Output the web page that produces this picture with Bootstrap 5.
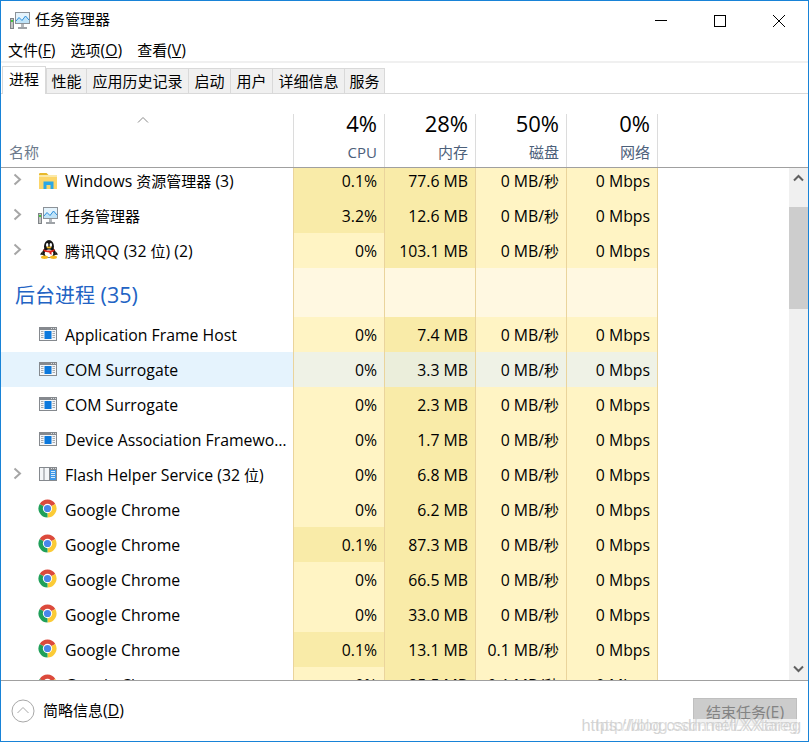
<!DOCTYPE html>
<html lang="zh-CN">
<head>
    <meta charset="UTF-8">
    <meta name="viewport" content="width=device-width, initial-scale=1.0">
    <title>任务管理器</title>
    <link href="https://cdn.jsdelivr.net/npm/bootstrap@5.3.0/dist/css/bootstrap.min.css" rel="stylesheet">
    <style>
        html, body { height: 100%; overflow: hidden; }
        body {
            font-family: "Open Sans", "Noto Sans CJK SC", sans-serif;
            font-size: 15.8px;
            color: #000;
            background: #fff;
        }
        .tm-cjk { font-size: 15px; }
        .tm-window { height: 742px; border: 1px solid #1883d7; position: relative; }
        .tm-title { height: 39px; padding-left: 9px; }
        .tm-title-text { margin-left: 5px; margin-top: -2px; }
        .tm-winbtn { width: 59px; height: 39px; }
        .tm-menu { height: 21px; padding-left: 7px; gap: 15px; line-height: 21px; }
        .tm-band { height: 2px; background: #f0f0f0; }

        .tm-tabs { height: 31px; padding-left: 1px; padding-top: 3px; border-bottom: 1px solid #d9d9d9; flex-wrap: nowrap; }
        .tm-tabs .nav-link {
            height: 25px;
            margin-top: 2px;
            padding: 0 5.5px;
            font-size: 15px;
            line-height: 24px;
            color: #000;
            background: #f0f0f0;
            border: 0 solid #d9d9d9;
            border-width: 1px 0 0 1px;
            border-radius: 0;
        }
        .tm-tabs .tm-tab-narrow { padding: 0 4.5px; }
        .tm-tabs .nav-item:last-child .nav-link { border-right-width: 1px; }
        .tm-tabs .nav-link.active {
            height: 28px;
            margin-top: 0;
            margin-bottom: -1px;
            padding: 0 6px;
            line-height: 24px;
            background: #fff;
            border-width: 1px 1px 0 1px;
        }

        .tm-head { height: 53px; margin-top: 20px; }
        .tm-head-name { width: 292px; }
        .tm-head-name svg { margin-left: 136px; margin-top: 2px; }
        .tm-head-label { color: #6c7a8c; padding-left: 8px; line-height: 20px; font-size: 15px; margin-bottom: 5px; }
        .tm-head-cell { width: 91px; border-left: 1px solid #dcdcdc; padding-right: 7px; text-align: right; }
        .tm-head-cell:last-child { width: 92px; border-right: 1px solid #dcdcdc; }
        .tm-pct { font-size: 22px; line-height: 22px; margin-top: -2px; }
        .tm-res { color: #4c607a; font-size: 15px; line-height: 20px; margin-top: 8px; }
        .tm-rule { height: 1px; background: #a0a0a0; }

        .tm-list { height: 512px; overflow: hidden; }
        .tm-rows { margin-top: -5px; }
        .tm-row { height: 35px; line-height: 37px; }
        .tm-row-section { height: 49px; line-height: 54px; }
        .tm-name { width: 292px; padding-right: 6px; }
        .tm-name-text { margin-top: 2px; line-height: 35px; }
        .tm-arrow { width: 37px; padding-left: 12px; }
        .tm-arrow svg { margin-top: -2px; }
        .tm-ico { width: 27px; }
        .tm-ic-folder { margin-left: 1px; }
        .tm-ic-qq { margin-left: 2px; margin-top: -3px; }
        .tm-ic-app, .tm-ic-flash { margin-left: 1px; margin-top: -1px; }
        .tm-ic-chrome { margin-top: -2px; }
        .tm-sect { font-size: 21.5px; color: #2263c4; padding-left: 14px; }
        .tm-sect .tm-cjk { font-size: 20px; }
        .tm-cell {
            width: 91px;
            padding-right: 7px;
            text-align: right;
            background: #fff4c4;
            border-left: 1px solid #ead49c;
        }
        .tm-cell:last-child { width: 92px; border-right: 1px solid #ead49c; }
        .tm-hot { background: #f9eba8; }
        .tm-row-section .tm-cell { background: #fff8e1; }
        .tm-row-hover .tm-name { background: #e5f3fd; }
        .tm-row-hover .tm-cell { background: #eff2e6; }
        .tm-row-hover .tm-hot { background: #ebeedb; }

        .tm-scroll { width: 19px; margin-left: auto; background: #f0f0f0; }
        .tm-scroll-btn { height: 20px; }
        .tm-scroll-down { padding-bottom: 2px; }
        .tm-thumb { height: 102px; margin-top: 19px; background: #cdcdcd; }

        .tm-foot { height: 60px; padding: 0 11px 0 10px; }
        .tm-less { margin-left: 8px; margin-top: -1px; }
        .tm-end {
            width: 104px;
            height: 28px;
            padding: 0;
            margin-top: 1px;
            font-size: 15.8px;
            line-height: 26px;
            border-radius: 0;
        }
        .tm-end.disabled {
            color: #838383;
            background: #cccccc;
            border: 1px solid #bfbfbf;
            opacity: 1;
        }
        .tm-mark {
            position: absolute;
            right: 7px;
            bottom: 10px;
            font-family: "Liberation Sans", sans-serif;
            font-size: 16.4px;
            line-height: 12px;
            color: rgba(200, 200, 200, .8);
            text-shadow: 1px 1px 0 rgba(255, 255, 255, .6);
            white-space: nowrap;
            background: rgba(255, 255, 255, .75);
        }
        .tm-mark-2 { right: 10px; color: rgba(205, 205, 205, .7); background: none; }
    </style>
</head>
<body>
    <!-- icon sprites -->
    <svg width="0" height="0" class="position-absolute">
        <symbol id="i-taskmgr" viewBox="0 0 20 17">
            <rect x="0.5" y="6.5" width="3" height="10" fill="#c4c6c4" stroke="#808488"/>
            <rect x="1" y="8" width="2" height="2" fill="#46c83c"/>
            <rect x="5.5" y="0.5" width="14" height="11" fill="#e4f3fc" stroke="#8c9298"/>
            <path d="M6 9 9 5.5 12 8.5 15.500 4 19 8V11H6Z" fill="#bfe3f8"/>
            <path d="M6 9 9 5.500 12 8.500 15.500 4 19 8" fill="none" stroke="#2b8fdc"/>
            <rect x="11" y="12" width="3" height="3" fill="#b4b8bc"/>
            <rect x="8" y="15" width="9" height="2" fill="#9ea2a6"/>
        </symbol>
        <symbol id="i-folder" viewBox="0 0 18 16">
            <path d="M0 1.500C0 .7.500 0 1.200 0H7.500L9.500 2H0Z" fill="#e8b92c"/>
            <rect y="2" width="18" height="14" fill="#fcd66a"/>
            <rect y="2" width="18" height="2" fill="#fbe9a8"/>
            <path d="M4.500 16V8.500H14.500V16H11.500V12H7.500V16Z" fill="#2aa7e6"/>
        </symbol>
        <symbol id="i-qq" viewBox="0 0 18 19">
            <ellipse cx="9" cy="6.500" rx="5" ry="6.500" fill="#151515"/>
            <ellipse cx="9" cy="12.500" rx="6.500" ry="5.500" fill="#151515"/>
            <path d="M2.500 11 0 14.500 3 15Z M15.500 11 18 14.500 15 15Z" fill="#151515"/>
            <ellipse cx="9" cy="13.500" rx="4.300" ry="4" fill="#fff"/>
            <ellipse cx="7.200" cy="5" rx="1.200" ry="1.900" fill="#fff"/>
            <ellipse cx="10.800" cy="5" rx="1.200" ry="1.900" fill="#fff"/>
            <ellipse cx="9" cy="7.500" rx="2.500" ry="1" fill="#f0b91e"/>
            <path d="M3.500 9C6 11 12 11 14.500 9L14.500 11C13 12 12 12.200 11.500 12.300V15L9.500 13.500V12.400C7 12.400 5.500 12 3.500 11Z" fill="#e0231c"/>
            <ellipse cx="4.500" cy="17.300" rx="3.500" ry="1.700" fill="#f5b71e"/>
            <ellipse cx="13.500" cy="17.300" rx="3.500" ry="1.700" fill="#f5b71e"/>
        </symbol>
        <symbol id="i-app" viewBox="0 0 18 14">
            <rect width="18" height="14" fill="#85898e"/>
            <rect x="1" y="3" width="16" height="10" fill="#f4f6f8"/>
            <rect x="5.500" y="4" width="7" height="8" fill="#0b78dc"/>
            <path d="M2 4.500H4.500M2 6.500H4.500M2 8.500H4.500M2 10.500H4.500M13.500 4.500H16M13.500 6.500H16M13.500 8.500H16M13.500 10.500H16" stroke="#a6aab0"/>
            <path d="M12 1.500H13M14 1.500H15M16 1.500H17" stroke="#d8dadc"/>
        </symbol>
        <symbol id="i-flash" viewBox="0 0 18 14">
            <rect width="18" height="14" fill="#85898e"/>
            <rect x="1" y="1" width="3.500" height="12" fill="#f4f6f8"/>
            <rect x="5.500" y="1" width="4.500" height="12" fill="#f4f6f8"/>
            <rect x="11" y="3" width="6" height="10" fill="#3c97e8"/>
            <path d="M12 4.500H16M12 6.500H16M12 8.500H16M12 10.500H16" stroke="#d5e9fa"/>
            <path d="M12 1.500H13M14 1.500H15M16 1.500H17" stroke="#d8dadc"/>
        </symbol>
        <symbol id="i-chrome" viewBox="0 0 20 20">
            <path d="M10 10 1.770 5.250A9.500 9.500 0 0 1 18.230 5.250Z" fill="#dc4a3c"/>
            <path d="M10 10 18.230 5.250A9.500 9.500 0 0 1 10 19.500Z" fill="#fbcb36"/>
            <path d="M10 10 10 19.500A9.500 9.500 0 0 1 1.770 5.250Z" fill="#1fa05a"/>
            <circle cx="10" cy="10" r="4.900" fill="#fff"/>
            <circle cx="10" cy="10" r="3.800" fill="#4a86ea"/>
        </symbol>
        <symbol id="i-more" viewBox="0 0 9 13">
            <path d="M1.500 1.500 7 6.500 1.500 11.500" fill="none" stroke="#a6a6a6" stroke-width="2"/>
        </symbol>
    </svg>

    <div class="tm-window d-flex flex-column">
        <!-- title bar -->
        <div class="tm-title d-flex align-items-center">
            <svg width="20" height="17"><use href="#i-taskmgr"/></svg>
            <span class="tm-title-text tm-cjk">任务管理器</span>
            <div class="ms-auto d-flex">
                <div class="tm-winbtn d-flex align-items-center justify-content-center">
                    <svg width="14" height="14"><path d="M1 6.500H13" stroke="#000"/></svg>
                </div>
                <div class="tm-winbtn d-flex align-items-center justify-content-center">
                    <svg width="14" height="14"><rect x="1.500" y="1.500" width="11" height="11" fill="none" stroke="#000"/></svg>
                </div>
                <div class="tm-winbtn d-flex align-items-center justify-content-center">
                    <svg width="14" height="14"><path d="M1 1 13 13M13 1 1 13" stroke="#000"/></svg>
                </div>
            </div>
        </div>

        <!-- menu -->
        <div class="tm-menu d-flex">
            <span><span class="tm-cjk">文件</span>(<u>F</u>)</span>
            <span><span class="tm-cjk">选项</span>(<u>O</u>)</span>
            <span><span class="tm-cjk">查看</span>(<u>V</u>)</span>
        </div>
        <div class="tm-band"></div>

        <!-- tabs -->
        <ul class="nav tm-tabs">
            <li class="nav-item"><a class="nav-link active" href="#">进程</a></li>
            <li class="nav-item"><a class="nav-link tm-tab-narrow" href="#">性能</a></li>
            <li class="nav-item"><a class="nav-link" href="#">应用历史记录</a></li>
            <li class="nav-item"><a class="nav-link" href="#">启动</a></li>
            <li class="nav-item"><a class="nav-link" href="#">用户</a></li>
            <li class="nav-item"><a class="nav-link" href="#">详细信息</a></li>
            <li class="nav-item"><a class="nav-link tm-tab-narrow" href="#">服务</a></li>
        </ul>

        <!-- column headers -->
        <div class="tm-head d-flex">
            <div class="tm-head-name d-flex flex-column justify-content-between">
                <svg width="12" height="8"><path d="M1 6.500 6 1.500 11 6.500" fill="none" stroke="#8a8a8a"/></svg>
                <div class="tm-head-label">名称</div>
            </div>
            <div class="tm-head-cell"><div class="tm-pct">4%</div><div class="tm-res">CPU</div></div>
            <div class="tm-head-cell"><div class="tm-pct">28%</div><div class="tm-res">内存</div></div>
            <div class="tm-head-cell"><div class="tm-pct">50%</div><div class="tm-res">磁盘</div></div>
            <div class="tm-head-cell"><div class="tm-pct">0%</div><div class="tm-res">网络</div></div>
        </div>
        <div class="tm-rule"></div>

        <!-- process list -->
        <div class="tm-list d-flex">
            <div class="tm-rows flex-shrink-0" id="rows"></div>
            <div class="tm-scroll d-flex flex-column">
                <div class="tm-scroll-btn d-flex align-items-center justify-content-center">
                    <svg width="11" height="8"><path d="M1 6.500 5.500 2 10 6.500" fill="none" stroke="#606060" stroke-width="2"/></svg>
                </div>
                <div class="tm-thumb"></div>
                <div class="tm-scroll-btn tm-scroll-down d-flex align-items-center justify-content-center mt-auto">
                    <svg width="11" height="8"><path d="M1 1.500 5.500 6 10 1.500" fill="none" stroke="#606060" stroke-width="2"/></svg>
                </div>
            </div>
        </div>
        <div class="tm-rule"></div>

        <!-- footer -->
        <div class="tm-foot d-flex align-items-center">
            <svg width="24" height="24">
                <circle cx="12" cy="12" r="11" fill="none" stroke="#a8a8a8"/>
                <path d="M6.500 14 12 8.500 17.500 14" fill="none" stroke="#a8a8a8"/>
            </svg>
            <span class="tm-less"><span class="tm-cjk">简略信息</span>(<u>D</u>)</span>
            <button type="button" class="btn disabled tm-end ms-auto"><span class="tm-cjk">结束任务</span>(<u>E</u>)</button>
        </div>
        <div class="tm-mark">https://blog.csdn.net/LXXtareg</div>
        <div class="tm-mark tm-mark-2">http://blog.csdn.net/XXtareg</div>
    </div>

    <script>
        // name, icon, expandable, cpu, memory, disk, network
        const PROCESSES = [
            ['Windows 资源管理器 (3)', 'folder', true, '0.1%', '77.6 MB', '0 MB/秒', '0 Mbps'],
            ['任务管理器', 'taskmgr', true, '3.2%', '12.6 MB', '0 MB/秒', '0 Mbps'],
            ['腾讯QQ (32 位) (2)', 'qq', true, '0%', '103.1 MB', '0 MB/秒', '0 Mbps'],
            { section: '后台进程 (35)' },
            ['Application Frame Host', 'app', false, '0%', '7.4 MB', '0 MB/秒', '0 Mbps'],
            ['COM Surrogate', 'app', false, '0%', '3.3 MB', '0 MB/秒', '0 Mbps'],
            ['COM Surrogate', 'app', false, '0%', '2.3 MB', '0 MB/秒', '0 Mbps'],
            ['Device Association Framework Provider Host', 'app', false, '0%', '1.7 MB', '0 MB/秒', '0 Mbps'],
            ['Flash Helper Service (32 位)', 'flash', true, '0%', '6.8 MB', '0 MB/秒', '0 Mbps'],
            ['Google Chrome', 'chrome', false, '0%', '6.2 MB', '0 MB/秒', '0 Mbps'],
            ['Google Chrome', 'chrome', false, '0.1%', '87.3 MB', '0 MB/秒', '0 Mbps'],
            ['Google Chrome', 'chrome', false, '0%', '66.5 MB', '0 MB/秒', '0 Mbps'],
            ['Google Chrome', 'chrome', false, '0%', '33.0 MB', '0 MB/秒', '0 Mbps'],
            ['Google Chrome', 'chrome', false, '0.1%', '13.1 MB', '0.1 MB/秒', '0 Mbps'],
            ['Google Chrome', 'chrome', false, '0%', '85.5 MB', '0.1 MB/秒', '0 Mbps']
        ];
        const HOVER_INDEX = 5;

        const iconSizes = { folder: [18, 16], taskmgr: [20, 17], qq: [18, 19], app: [18, 14], flash: [18, 14], chrome: [19, 19] };

        // CJK glyphs run a size smaller than the Latin text next to them
        function cjk(text) {
            return text.replace(/[\u4e00-\u9fff]+/g, '<span class="tm-cjk">$&</span>');
        }

        function rowHtml(p, i) {
            if (p.section) {
                return `<div class="tm-row tm-row-section d-flex">
                    <div class="tm-name tm-sect">${cjk(p.section)}</div>
                    <div class="tm-cell"></div><div class="tm-cell"></div><div class="tm-cell"></div><div class="tm-cell"></div>
                </div>`;
            }
            const [name, icon, more, cpu, mem, disk, net] = p;
            const [w, h] = iconSizes[icon];
            const arrow = more ? '<svg width="9" height="13"><use href="#i-more"/></svg>' : '';
            return `<div class="tm-row d-flex ${i === HOVER_INDEX ? 'tm-row-hover' : ''}">
                <div class="tm-name d-flex align-items-center">
                    <div class="tm-arrow d-flex align-items-center flex-shrink-0">${arrow}</div>
                    <div class="tm-ico d-flex align-items-center flex-shrink-0"><svg class="tm-ic-${icon}" width="${w}" height="${h}"><use href="#i-${icon}"/></svg></div>
                    <div class="tm-name-text text-truncate">${cjk(name)}</div>
                </div>
                <div class="tm-cell ${cpu === '0%' ? '' : 'tm-hot'}">${cpu}</div>
                <div class="tm-cell tm-hot">${mem}</div>
                <div class="tm-cell">${cjk(disk)}</div>
                <div class="tm-cell">${net}</div>
            </div>`;
        }

        document.getElementById('rows').innerHTML = PROCESSES.map(rowHtml).join('');
    </script>
    <script src="https://cdn.jsdelivr.net/npm/bootstrap@5.3.0/dist/js/bootstrap.bundle.min.js"></script>
</body>
</html>
